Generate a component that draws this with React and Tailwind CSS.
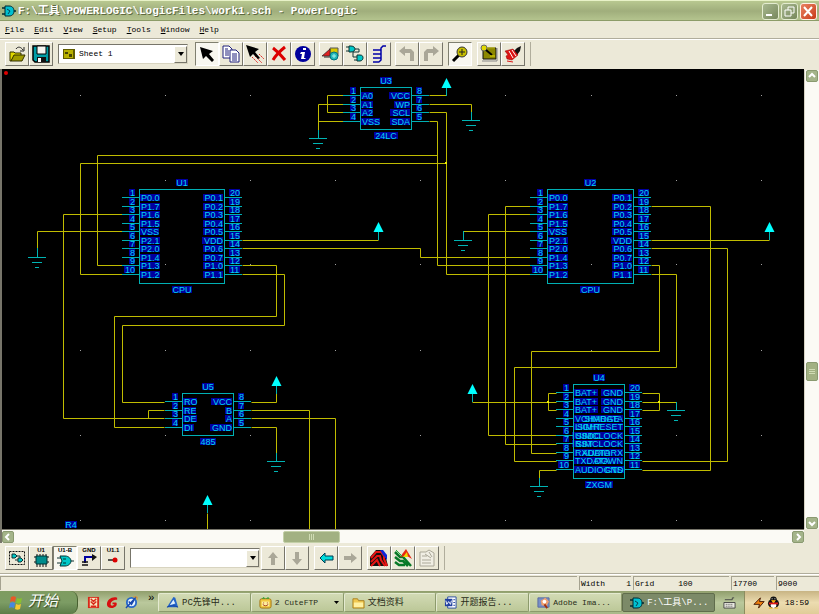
import React from "react";

const CHAR_WIDTHS = { I: 3, ".": 3, 1: 5, M: 8, W: 9, E: 6, T: 6, "+": 5, G: 7, O: 7, C: 7, D: 7, N: 7 };

const labelWidth = (text) =>
  [...text].reduce((sum, c) => sum + (CHAR_WIDTHS[c] || (/\d/.test(c) ? 5 : 6)), 0);

const P_LEFT = ["P0.0", "P1.7", "P1.6", "P1.5", "VSS", "P2.1", "P2.0", "P1.4", "P1.3", "P1.2"];
const P_RIGHT = ["P0.1", "P0.2", "P0.3", "P0.4", "P0.5", "VDD", "P0.6", "P0.7", "P1.0", "P1.1"];

const chips = [
  { ref: "U3", type: "24LC", x: 360, y: 87, w: 52, h: 42, left: ["A0", "A1", "A2", "VSS"], right: ["VCC", "WP", "SCL", "SDA"] },
  { ref: "U1", type: "CPU", x: 139, y: 189, w: 86, h: 94, left: P_LEFT, right: P_RIGHT },
  { ref: "U2", type: "CPU", x: 547, y: 189, w: 87, h: 94, left: P_LEFT, right: P_RIGHT },
  { ref: "U5", type: "485", x: 182, y: 393, w: 52, h: 42, left: ["RO", "RE", "DE", "DI"], right: ["VCC", "B", "A", "GND"] },
  {
    ref: "U4", type: "ZXGM", x: 573, y: 384, w: 52, h: 94,
    left: ["BAT+", "BAT+", "BAT+", "VCHARGE", "LIGHT", "USDC", "RST", "RXDATA", "TXDATA", "AUDIOGND"],
    right: ["GND", "GND", "GND", "SIMDATA", "SIMRESET", "SIMCLOCK", "SIMCLOCK", "AUDIORX", "DOWN", "CTS"],
  },
];

const wires = [
  "343,95 327,95 327,112 343,112",
  "343,104 318,104 318,130",
  "343,121 318,121",
  "429,95 446,95",
  "429,104 471,104 471,112",
  "429,112 446,112 446,274 531,274",
  "429,121 437,121 437,265 531,265",
  "437,155 97,155 97,265 122,265",
  "446,163 80,163 80,274 122,274",
  "122,214 63,214 63,418 164,418",
  "122,231 37,231 37,248",
  "242,240 378,240",
  "242,248 420,248 420,257 531,257",
  "242,265 276,265 276,316 114,316 114,427 164,427",
  "242,274 284,274 284,325 122,325 122,402 164,402",
  "164,410 148,410 148,418",
  "251,402 276,402 276,393",
  "251,410 309,410 309,530",
  "251,418 335,418 335,530",
  "251,427 276,427 276,453",
  "207,513 207,530",
  "531,206 505,206 505,444 556,444",
  "531,214 488,214 488,435 556,435",
  "531,231 463,231",
  "651,206 710,206 710,470 642,470",
  "651,240 769,240",
  "651,248 727,248 727,461 642,461",
  "651,265 659,265 659,351 531,351 531,453 556,453",
  "651,274 676,274 676,367 514,367 514,461 556,461",
  "556,393 548,393 548,410 556,410",
  "556,402 472,402",
  "556,470 539,470 539,479",
  "642,393 659,393 659,410 642,410",
  "642,402 676,402",
];

const grounds = [[318, 138, 8], [471, 120, 8], [37, 257, 9], [463, 240, 9], [276, 461, 8], [539, 486, 8], [676, 410, 8]];
const powers = [[446, 78], [378, 222], [769, 222], [276, 376], [207, 495], [472, 384]];
const junctions = [[446, 163], [548, 402], [659, 402]];

const GRID_X = [80, 165, 250, 335, 420, 505, 591, 676, 761];
const GRID_Y = [95, 180, 264, 350, 435, 520];

const pinY = (chip, i) => Math.round(chip.y + 8 + i * 8.5);

// every text of a chip, so that all the highlights can be drawn below all the letters
const chipLabels = (chip) => {
  const { ref: name, type, x, y, w, h, left, right } = chip;
  const labels = [
    { x: x + w / 2, y: y - 6, text: name, anchor: "middle" },
    { x: x + w / 2, y: y + h + 7, text: type, anchor: "middle" },
  ];
  left.forEach((text, i) => {
    const py = pinY(chip, i);
    labels.push({ x: x - 4, y: py - 4, text: String(i + 1), anchor: "end" });
    labels.push({ x: x + w + 5, y: py - 4, text: String(2 * left.length - i), anchor: "start" });
    labels.push({ x: x + 2, y: py + 1, text, anchor: "start" });
    labels.push({ x: x + w - 2, y: py + 1, text: right[i], anchor: "end" });
  });
  return labels;
};

const labels = [...chips.flatMap(chipLabels), { x: 71, y: 525, text: "R4", anchor: "middle" }];

function Highlight({ x, y, text, anchor }) {
  const w = labelWidth(text);
  const left = anchor === "end" ? x - w : anchor === "middle" ? x - w / 2 : x;
  return <rect x={Math.round(left) - 1} y={y - 4} width={w + 1} height="7" fill="#0000a0" />;
}

function Schematic() {
  return (
    <svg viewBox="2 69 802 460" className="block w-full bg-black font-['Liberation_Sans',sans-serif] text-[9px]" role="img" aria-label="Schematic sheet 1">
      {GRID_Y.map((y) => GRID_X.map((x) => <rect key={`${x}-${y}`} x={x} y={y} width="1" height="1" fill="#a0a0a0" />))}
      <g transform="translate(.5 .5)" fill="none" stroke="#c0bc00">
        {wires.map((p) => <polyline key={p} points={p} />)}
      </g>
      {labels.map((l, i) => <Highlight key={i} {...l} />)}
      {chips.map((c) => (
        <g key={c.ref} fill="none" stroke="#00b0b4">
          {c.left.map((_, i) => (
            <path key={i} d={`M${c.x - 17} ${pinY(c, i) + 0.5}H${c.x}M${c.x + c.w} ${pinY(c, i) + 0.5}h17`} />
          ))}
          <rect x={c.x + 0.5} y={c.y + 0.5} width={c.w - 1} height={c.h} />
        </g>
      ))}
      <g fill="#00d8f0">
        {labels.map((l, i) => <text key={i} x={l.x} y={l.y + 3} textAnchor={l.anchor}>{l.text}</text>)}
      </g>
      {grounds.map(([x, y, stem]) => (
        <path key={x} d={`M${x + 0.5} ${y - stem}v${stem}M${x - 9} ${y + 0.5}h18M${x - 5} ${y + 5.5}h10M${x - 2} ${y + 10.5}h4`} stroke="#00b4b4" fill="none" />
      ))}
      {powers.map(([x, y]) => (
        <g key={x}>
          <path d={`M${x + 0.5} ${y + 8}v10`} stroke="#00b4b4" />
          <path d={`M${x + 0.5} ${y}l5 10h-10z`} fill="#00ffff" />
        </g>
      ))}
      {junctions.map(([x, y]) => <rect key={`${x}${y}`} x={x - 1} y={y - 1} width="2" height="2" fill="#f0f000" />)}
      <circle cx="6" cy="73" r="2" fill="#e00000" />
    </svg>
  );
}

// 18x18 toolbar drawings
const icons = {
  open: (
    <>
      <path d="M2 7h4l1 1h6v3H7l-4 5H2z" fill="#e0d800" stroke="#333000" />
      <path d="M3 16l3-6h11l-3 6z" fill="#a09c00" stroke="#333000" />
      <path d="M8 4c2-3 5-2 7 1M16 2v4h-4" fill="none" stroke="#222" />
    </>
  ),
  save: (
    <>
      <path d="M1 1h16v16H3l-2-2z" fill="#009ca4" stroke="#000" strokeWidth="1.5" />
      <path d="M5 1h9v8H5z" fill="#f4f4f0" stroke="#000" />
      <path d="M5 12h9v5H5z" fill="#111" />
      <path d="M6 13h3v4H6z" fill="#fff" />
    </>
  ),
  arrow: <path d="M2 2l13 4-4 3 5 6-2 2-6-6-3 3z" fill="#000" />,
  copy: (
    <>
      <path d="M1 1h6l3 3v9H1z" fill="#fff" stroke="#20207c" />
      <path d="M8 5h6l3 3v9H8z" fill="#fff" stroke="#20207c" />
      <path d="M3 4h3M3 6h4M3 8h4M3 10h4M10 9h5M10 11h5M10 13h5M10 15h5" stroke="#20207c" />
    </>
  ),
  arrowRed: (
    <>
      <path d="M9 11l7 7M6 12l6 6M13 9l5 5" stroke="#e02020" strokeDasharray="2 1" />
      <path d="M0 0l13 4-4 3 5 6-2 1-5-5-3 3z" fill="#000" />
    </>
  ),
  cross: <path d="M3 3c4 3 8 7 12 12M15 2C10 6 6 10 3 15" stroke="#dc0000" strokeWidth="3" fill="none" />,
  info: (
    <>
      <circle cx="9" cy="9" r="8" fill="#00009c" />
      <path d="M9 3h3v2H9zM7 7h4l-1 6h2l-1 1H7l1-5H6z" fill="#fff" />
    </>
  ),
  parts: (
    <>
      <path d="M8 3h8v8H8z" fill="#d8c800" stroke="#555" />
      <path d="M0 11l8-7v7z" fill="#e02020" stroke="#222" strokeWidth=".7" />
      <path d="M2 12h8" stroke="#222" />
      <circle cx="12" cy="11" r="4" fill="#20b8b8" stroke="#007080" />
      <path d="M10 11h4M12 9v4" stroke="#a0f0f0" />
    </>
  ),
  gates: (
    <>
      <path d="M3 1h2c3 0 4 2 4 3s-1 3-4 3H3zM11 10h3c3 0 3 2 3 3s-1 3-3 3h-3z" fill="#00c8c8" stroke="#133" />
      <path d="M0 2h3M0 6h3M9 4h4v3H7v5h4M8 15h3" stroke="#133" fill="none" />
    </>
  ),
  bus: (
    <path d="M16 1h-3l-2 2v12l-2 2M11 5H3M11 9H3M11 13H3M9 17H3" stroke="#0000a8" strokeWidth="1.5" fill="none" />
  ),
  undo: <path d="M1 6l6-5v3h6l3 3v9h-4V8H7v3z" fill="#aaa798" />,
  redo: <path d="M17 6l-6-5v3H5L2 7v9h4V8h5v3z" fill="#aaa798" />,
  zoom: (
    <>
      <path d="M8 10l-6 6" stroke="#000" strokeWidth="3" />
      <circle cx="11" cy="7" r="5" fill="#c8c000" stroke="#333" />
      <path d="M11 4v6M8 7h6" stroke="#222" />
    </>
  ),
  sheet: (
    <>
      <path d="M3 3h13v11H3z" fill="#8c8800" stroke="#111" />
      <path d="M2 16h15V3" stroke="#888" fill="none" />
      <circle cx="4" cy="3" r="3" fill="#e0d800" stroke="#666" />
      <path d="M6 5l6 5" stroke="#000" strokeWidth="2" />
      <path d="M10 11h5M7 3h8" stroke="#e0d800" />
    </>
  ),
  brush: (
    <>
      <path d="M10 6l3-3 4-2-1 5-3 4z" fill="#111" />
      <path d="M1 6l8-2 5 6-6 5-5-1-1-3 2-1z" fill="#dc1414" stroke="#900" strokeWidth=".5" />
      <path d="M5 6l4 7M8 5l4 6" stroke="#fff" />
      <path d="M3 16l6 1" stroke="#dc1414" />
    </>
  ),
  selectGates: (
    <>
      <path d="M1.500 2.500h15v13h-15z" stroke="#111" strokeDasharray="2 1" fill="none" />
      <path d="M4 5h3l2 2-2 2H4zM10 9h3l2 2-2 2h-3z" fill="#00c8c8" stroke="#133" />
      <path d="M9 7h3v2M7 11h3" stroke="#133" fill="none" />
    </>
  ),
  chip: (
    <>
      <path d="M5 5v13M8 5v13M11 5v13M14 5v13M2 8h15M2 13h15" stroke="#111" />
      <path d="M4 7h11v8H4z" fill="#008c8c" stroke="#033" />
    </>
  ),
  gate: (
    <>
      <path d="M1 9h4M1 14h4M14 12h4" stroke="#133" />
      <path d="M4 7h5c4 0 6 3 6 5s-2 5-6 5H4l2-5z" fill="#00c8c8" stroke="#033" />
      <path d="M7 10h3M7 14h3" stroke="#033" />
    </>
  ),
  net: (
    <>
      <path d="M5 14V8h8" stroke="#0000a0" strokeWidth="2" fill="none" />
      <path d="M12 5l5 3-5 4z" fill="#111" />
      <path d="M2 13h6M2 16h6" stroke="#111" strokeWidth="1.500" />
    </>
  ),
  pin: (
    <>
      <path d="M4 11h9" stroke="#222" strokeWidth="1.500" />
      <circle cx="11" cy="11" r="2.500" fill="#dc0000" />
    </>
  ),
  up: <path d="M9 3l5 6h-3v7H7V9H4z" fill="#aaa798" />,
  down: <path d="M9 16l5-6h-3V3H7v7H4z" fill="#aaa798" />,
  left: <path d="M3 9l5-5v3h8v4H8v3z" fill="#00dcdc" stroke="#003c50" />,
  right: <path d="M16 9l-6-5v3H3v4h7v3z" fill="#aaa798" />,
  traces: (
    <>
      <path d="M0 8l6-7h6l3 4 3 12H0z" fill="#111" />
      <path d="M1 9l5-6h5l3 4v3l3 7M1 13l6-6h3l1 4 4 6M1 17l6-6 3 6" stroke="#e81414" strokeWidth="2" fill="none" />
      <path d="M10 1h3l4 5v5l-4-5z" fill="#1028d8" />
    </>
  ),
  layers: (
    <>
      <path d="M1 3l5 5h3l8 9M1 8l5 4h3l5 5M1 13l4 3h6" stroke="#087828" strokeWidth="2.500" fill="none" />
      <path d="M6 8l6-8 6 10-5-3z" fill="#e82814" />
      <path d="M9 8l4-5 1 5z" fill="#f0d800" />
      <path d="M2 1l6 6" stroke="#20b040" />
    </>
  ),
  props: (
    <>
      <path d="M2 3h6l3-2 5 3v13H2z" fill="#f0eee4" stroke="#aaa798" />
      <path d="M4 7h5M4 11h9M4 14h9M7 5l6 4M11 3l3 5" stroke="#aaa798" />
    </>
  ),
};

function ToolButton({ icon, title, pressed, caption }) {
  const look = pressed
    ? "border-t-[#808070] border-l-[#808070] border-r-white border-b-white bg-[#f8f7f0]"
    : "border-t-white border-l-white border-r-[#77756a] border-b-[#77756a] bg-[#ece9d8]";
  return (
    <button type="button" title={title} className={`w-6 h-6 shrink-0 border flex items-center justify-center ${look}`}>
      <svg viewBox="0 0 18 18" className="w-[18px] h-[18px] overflow-visible font-['Liberation_Sans',sans-serif] text-[6px] font-bold">
        {caption && <text x="9" y="3" textAnchor="middle">{caption}</text>}
        {icons[icon]}
      </svg>
    </button>
  );
}

function ToolSelect({ label, options, icon, className }) {
  return (
    <label className={`relative flex items-center h-5 bg-white border border-t-[#77756a] border-l-[#77756a] border-r-[#d8d4c0] border-b-[#d8d4c0] ${className}`}>
      {icon}
      <select aria-label={label} className="appearance-none flex-1 min-w-0 h-full bg-white pl-1 outline-none">
        {options.map((o) => <option key={o}>{o}</option>)}
      </select>
      <span className="pointer-events-none w-[13px] h-[17px] bg-[#ece9d8] border border-t-white border-l-white border-r-[#77756a] border-b-[#77756a] flex items-center justify-center">
        <svg viewBox="0 0 6 4" className="w-[6px] h-1"><path d="M0 0h6L3 4z" /></svg>
      </span>
    </label>
  );
}

const chevrons = { up: "M3 7l3-3 3 3", down: "M3 5l3 3 3-3", left: "M7 3L4 6l3 3", right: "M5 3l3 3-3 3" };

function ScrollButton({ dir }) {
  return (
    <button type="button" aria-label={`Scroll ${dir}`} className="w-3 h-3 shrink-0 rounded-[2px] border border-[#8a9a70] bg-[#a4b48a]">
      <svg viewBox="1 1 10 10" className="block w-full h-full"><path d={chevrons[dir]} fill="none" stroke="#fff" strokeWidth="2" /></svg>
    </button>
  );
}

function AppIcon() {
  return (
    <svg viewBox="0 0 14 12" className="w-[14px] h-3 shrink-0">
      <path d="M0 3h4M0 9h4M11 6h3" stroke="#002830" strokeWidth="1.500" />
      <path d="M3 1h4c4 0 5 3 5 5s-1 5-5 5H3z" fill="#00c0d0" stroke="#002830" />
      <path d="M5 4l3 2-2 3" stroke="#045" fill="none" />
    </svg>
  );
}

const taskIcons = {
  pc: <><path d="M1 12L8 1l2 1 3 10z" fill="#2464c8" /><path d="M4 10l4-6 2 4z" fill="#e0f0ff" /><path d="M1 12c4-2 8-2 12 0" stroke="#1040a0" fill="none" /></>,
  ftp: <><rect x="1" y="3" width="12" height="10" rx="2" fill="#f0c840" stroke="#a07010" /><path d="M3 3l2-2 2 2 3-2 1 2z" fill="#30a030" /><path d="M3 6h8v5H3z" fill="#fff0a0" /><path d="M5 7v1M9 7v1M4 9c2 2 4 2 6 0" stroke="#a03010" fill="none" /></>,
  folder: <><path d="M1 3h5l1 2h6v8H1z" fill="#f0c850" stroke="#a88020" /><path d="M2 7h10v5H2z" fill="#fff0a0" /></>,
  word: <><path d="M4 1h9v12H4z" fill="#fff" stroke="#2448a0" /><path d="M1 3h8v8H1z" fill="#2040a0" /><path d="M2 5l1 4 2-3 2 3 1-4" stroke="#fff" fill="none" /><path d="M10 4h2M10 7h2M10 10h2" stroke="#2448a0" /></>,
  adobe: <><path d="M1 2h12v10H1z" fill="#7890c8" stroke="#5868a0" /><path d="M4 5l5-3 4 4-3 5-5-1z" fill="#f0a070" /><circle cx="8" cy="6" r="2" fill="#fff" /><path d="M8 9l3 4" stroke="#a03010" strokeWidth="2" /></>,
};

function SmallIcon({ children }) {
  return <svg viewBox="0 0 14 14" className="w-[13px] h-[13px] shrink-0">{children}</svg>;
}

const tasks = [
  { icon: "pc", label: "PC先锋中..." },
  { icon: "ftp", label: "2 CuteFTP", menu: true },
  { icon: "folder", label: "文档资料" },
  { icon: "word", label: "开题报告..." },
  { icon: "adobe", label: "Adobe Ima..." },
  { icon: "app", label: "F:\\工具\\P...", active: true },
];

const menus = ["File", "Edit", "View", "Setup", "Tools", "Window", "Help"];

function TitleBar() {
  return (
    <header className="h-[21px] flex items-center px-[2px] border-t border-[#e8f2c8] bg-linear-to-b from-[#b8c890] via-[#a0ae7c] to-[#b6c690] shadow-[inset_0_-1px_0_#8c9c68]">
      <AppIcon />
      <h1 className="flex-1 min-w-0 truncate pl-[2px] text-[11px] font-bold text-white [text-shadow:1px_1px_0_#5c6840]">
        F:\工具\POWERLOGIC\LogicFiles\work1.sch - PowerLogic
      </h1>
      <div className="flex gap-[2px]">
        <button type="button" aria-label="Minimize" className="w-[17px] h-[17px] rounded-[3px] border border-[#e4ecd0] bg-linear-to-br from-[#a8b890] to-[#78885c]">
          <svg viewBox="0 0 15 15" className="block"><path d="M3 10h6v2H3z" fill="#fff" /></svg>
        </button>
        <button type="button" aria-label="Restore" className="w-[17px] h-[17px] rounded-[3px] border border-[#e4ecd0] bg-linear-to-br from-[#a8b890] to-[#78885c]">
          <svg viewBox="0 0 15 15" className="block"><path d="M6 6V3h6v6H9M3 6h6v6H3z" fill="none" stroke="#fff" /></svg>
        </button>
        <button type="button" aria-label="Close" className="w-[17px] h-[17px] rounded-[3px] border border-[#fff0e8] bg-linear-to-br from-[#e88060] to-[#c83814]">
          <svg viewBox="0 0 15 15" className="block"><path d="M3 3l8 9M11 3l-8 9" stroke="#fff" strokeWidth="2" /></svg>
        </button>
      </div>
    </header>
  );
}

function TopTools() {
  return (
    <div className="h-[31px] flex items-center pl-[5px] border-t border-[#b0ad9c] shadow-[inset_0_1px_0_#fff]">
      <ToolButton icon="open" title="Open" />
      <ToolButton icon="save" title="Save" />
      <ToolSelect
        label="Sheet"
        options={["Sheet 1"]}
        className="w-[130px] ml-[5px] mr-[7px]"
        icon={
          <svg viewBox="0 0 12 10" className="w-3 h-[10px] ml-1 shrink-0">
            <path d="M0 0h12v10H0z" fill="#605c00" />
            <path d="M1 1h9v8H1z" fill="#b8b000" />
            <path d="M2 3h3v2H2zM6 5h3v3H6z" fill="#484400" />
          </svg>
        }
      />
      <ToolButton icon="arrow" title="Select" pressed />
      <ToolButton icon="copy" title="Duplicate" />
      <ToolButton icon="arrowRed" title="Move" />
      <ToolButton icon="cross" title="Delete" />
      <ToolButton icon="info" title="Query" />
      <div className="flex ml-1">
        <ToolButton icon="parts" title="Add part" />
        <ToolButton icon="gates" title="Add connection" />
        <ToolButton icon="bus" title="Add bus" />
      </div>
      <div className="flex ml-1">
        <ToolButton icon="undo" title="Undo" />
        <ToolButton icon="redo" title="Redo" />
      </div>
      <div className="flex ml-[5px]">
        <ToolButton icon="zoom" title="Zoom" pressed />
      </div>
      <div className="flex ml-[5px] pr-[5px] border-r border-[#b0ad9c]">
        <ToolButton icon="sheet" title="Board view" />
        <ToolButton icon="brush" title="Redraw" />
      </div>
    </div>
  );
}

function BottomTools() {
  return (
    <div className="h-[31px] flex items-center pl-[5px] border-b border-[#b0ad9c]">
      <ToolButton icon="selectGates" title="Select anything" />
      <ToolButton icon="chip" title="Parts" caption="U1" />
      <ToolButton icon="gate" title="Gates" caption="U1-B" pressed />
      <ToolButton icon="net" title="Nets" caption="GND" />
      <ToolButton icon="pin" title="Pins" caption="U1.1" />
      <ToolSelect label="Find" options={[""]} className="w-[130px] ml-[5px] mr-[1px]" />
      <ToolButton icon="up" title="Previous" />
      <ToolButton icon="down" title="Next" />
      <div className="flex ml-[5px]">
        <ToolButton icon="left" title="Back" />
        <ToolButton icon="right" title="Forward" />
      </div>
      <div className="flex ml-[5px] pr-[5px] border-r border-[#b0ad9c]">
        <ToolButton icon="traces" title="Nets view" />
        <ToolButton icon="layers" title="Layers view" />
        <ToolButton icon="props" title="Properties" />
      </div>
    </div>
  );
}

const statusCell = "h-[14px] flex items-center border-t border-l border-[#a5a290]";

function StatusBar() {
  return (
    <footer className="h-[17px] flex items-center gap-[2px] pt-[1px] shadow-[inset_0_1px_0_#fff]">
      <div className={`${statusCell} flex-1`} />
      <div className={`${statusCell} w-[52px] justify-between pl-[1px]`}><span>Width</span><span>1</span></div>
      <div className={`${statusCell} w-24 gap-6 pl-[1px]`}><span>Grid</span><span>100</span></div>
      <div className={`${statusCell} w-[43px] pl-[1px]`}>17700</div>
      <div className={`${statusCell} w-[43px] pl-[1px]`}>9000</div>
    </footer>
  );
}

function TaskBar() {
  return (
    <nav className="h-[23px] flex items-stretch bg-linear-to-b from-[#909e6c] via-[#bac89c] to-[#a8b888]">
      <button type="button" className="w-[78px] shrink-0 flex items-center gap-1 pl-2 rounded-r-lg bg-linear-to-b from-[#7e9c60] via-[#7c9c64] to-[#5c7c48] border-r border-[#486030] text-white italic text-[15px] leading-none [text-shadow:1px_1px_1px_#304820]">
        <svg viewBox="0 0 16 16" className="w-4 h-4 shrink-0">
          <path d="M3 2c2-1 3-1 5 0L7 7C5 6 4 6 2 7z" fill="#e85828" />
          <path d="M9 3c2 1 3 1 5 0l-1 5c-2 1-3 1-5 0z" fill="#88c030" />
          <path d="M2 8c2-1 3-1 5 0l-1 5c-2-1-3-1-5 0z" fill="#4888e0" />
          <path d="M8 9c2 1 3 1 5 0l-1 5c-2 1-3 1-5 0z" fill="#f8c830" />
        </svg>
        开始
      </button>
      <div className="w-20 shrink-0 flex items-center gap-[6px] pl-[9px]">
        <SmallIcon><path d="M1 1h12v12H1z" fill="#d82818" /><path d="M3 2h8v10H3z" fill="#f8e8c0" /><path d="M4 3l3 3 3-3M4 6l3 3 3-3M4 11h6" stroke="#d82818" fill="none" strokeWidth="1.500" /></SmallIcon>
        <SmallIcon><path d="M12 2C7 0 1 4 1 9c0 4 5 5 8 3 3-1 3-4 2-5H7v2h2c-1 2-4 2-4 0 0-3 3-5 7-5z" fill="#d81010" /></SmallIcon>
        <SmallIcon><circle cx="7" cy="7" r="5" fill="#e8f4ff" stroke="#2868c8" strokeWidth="2" /><path d="M1 13L12 1M4 6l3 3 3-5" stroke="#1848b0" strokeWidth="1.500" fill="none" /><path d="M9 1h4v3" stroke="#e89020" fill="none" /></SmallIcon>
        <span className="self-start pl-1 text-[11px] leading-[14px]">»</span>
      </div>
      <div className="flex-1 min-w-0 flex py-[2px]">
        {tasks.map((t) => (
          <button
            key={t.label}
            type="button"
            className={`flex-1 min-w-0 flex items-center gap-[3px] pl-[7px] pr-1 rounded-[2px] border text-[9px] whitespace-nowrap ${
              t.active
                ? "bg-[#7c8a68] border-[#606c4c] text-white"
                : "bg-linear-to-b from-[#d2dab4] to-[#bcc898] border-t-[#e4ead0] border-l-[#e4ead0] border-r-[#8c9a6c] border-b-[#8c9a6c] text-[#282c18]"
            }`}
          >
            {t.icon === "app" ? <AppIcon /> : <SmallIcon>{taskIcons[t.icon]}</SmallIcon>}
            <span className={t.menu || t.icon === "adobe" ? "text-[8px]" : ""}>{t.label}</span>
            {t.menu && <svg viewBox="0 0 5 3" className="w-[5px] h-[3px] ml-auto"><path d="M0 0h5L2.500 3z" /></svg>}
          </button>
        ))}
      </div>
      <div className="w-[29px] shrink-0 flex items-center justify-center">
        <SmallIcon><path d="M1 7h12v6H1z" fill="#e8e8e0" stroke="#444" /><path d="M3 9h8M3 11h8" stroke="#444" strokeDasharray="1 1" /><path d="M2 4h8V2h2" stroke="#444" fill="none" /></SmallIcon>
      </div>
      <div className="w-[75px] shrink-0 flex items-center gap-[1px] pl-2 border-l border-[#8c8c60] bg-linear-to-b from-[#c8b484] via-[#ecdcb0] to-[#e0cc98]">
        <SmallIcon><path d="M1 9l7-7-1 4h5l-6 7 1-4z" fill="#f08010" stroke="#401808" /></SmallIcon>
        <SmallIcon><ellipse cx="7" cy="8" rx="6" ry="5" fill="#111" /><circle cx="7" cy="4" r="3.500" fill="#111" /><ellipse cx="7" cy="10" rx="3" ry="3" fill="#fff" /><path d="M2 7h10v2H2z" fill="#e01818" /><path d="M5 5h4l-2 2zM2 13h4M8 13h4" fill="#f8b010" stroke="#f8b010" /><path d="M5 3h1M8 3h1" stroke="#fff" /></SmallIcon>
        <time className="pl-1">18:59</time>
      </div>
    </nav>
  );
}

export default function App() {
  return (
    <div className="min-h-screen flex flex-col bg-[#ece9d8] text-black text-[8px] leading-3 font-['Liberation_Mono','Noto_Sans_CJK_SC',monospace]">
      <TitleBar />
      <div className="h-[17px] flex items-center gap-[10px] pl-[5px]">
        {menus.map((m) => (
          <button key={m} type="button"><span className="underline">{m[0]}</span>{m.slice(1)}</button>
        ))}
      </div>
      <TopTools />
      <main className="flex border-l-2 border-[#77756a]">
        <div className="flex-1 min-w-0">
          <Schematic />
          <div className="h-[14px] flex items-center bg-[#fbfaf5] border-t border-[#77756a]">
            <ScrollButton dir="left" />
            <div className="grow-[269]" />
            <div className="w-[57px] h-3 rounded-[2px] border border-[#c4d0a8] bg-[#a2b182] flex items-center justify-center gap-[1px]">
              {[0, 1, 2].map((i) => <span key={i} className="w-px h-[6px] bg-[#d0dcb4]" />)}
            </div>
            <div className="grow-[451]" />
            <ScrollButton dir="right" />
          </div>
        </div>
        <div className="w-[15px] shrink-0 flex flex-col items-center pt-[1px] bg-[#ece9d8]">
          <div className="flex-1 flex flex-col items-center w-full bg-[#fbfaf5] border-l border-[#d8d4c4]">
            <ScrollButton dir="up" />
            <div className="grow-[280]" />
            <div className="w-3 h-[19px] rounded-[2px] border border-[#8a9a70] bg-[#a2b182] flex flex-col items-center justify-center gap-[1px]">
              {[0, 1, 2].map((i) => <span key={i} className="w-[6px] h-px bg-[#d0dcb4]" />)}
            </div>
            <div className="grow-[136]" />
            <ScrollButton dir="down" />
          </div>
          <div className="h-[14px]" />
        </div>
      </main>
      <BottomTools />
      <StatusBar />
      <TaskBar />
    </div>
  );
}
